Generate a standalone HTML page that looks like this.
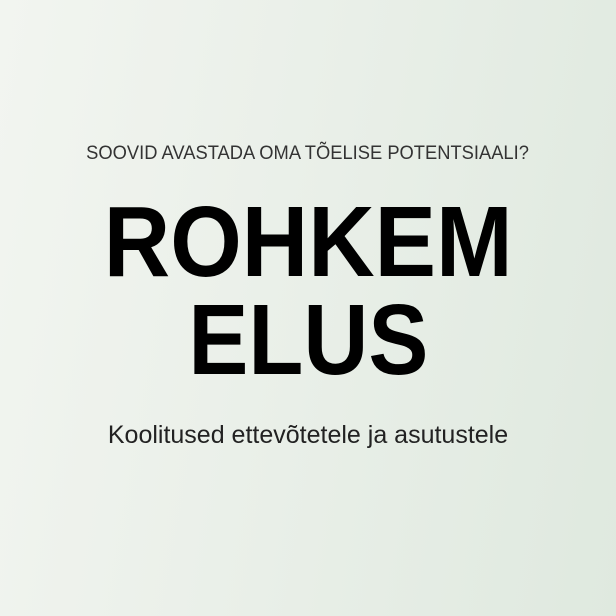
<!DOCTYPE html>
<html><head><meta charset="utf-8"><style>
html,body{margin:0;padding:0}
body{width:616px;height:616px;overflow:hidden;position:relative;background:linear-gradient(100deg,#f2f5f0 0%,#e9efe8 50%,#dfe9df 100%);font-family:"Liberation Sans",sans-serif;color:#000}
.l{position:absolute;left:0;width:616px;text-align:center;white-space:nowrap}
.l span{display:inline-block}
</style></head><body>
<div class="l" style="top:143.5px;font-size:19.5px;line-height:19.5px;color:#333"><span style="transform:scaleX(0.94)">SOOVID AVASTADA OMA TÕELISE POTENTSIAALI?</span></div>
<div class="l" style="top:192px;font-size:100px;line-height:100px;font-weight:bold"><span style="transform:scaleX(0.92)">ROHKEM</span></div>
<div class="l" style="top:290px;font-size:100px;line-height:100px;font-weight:bold"><span style="transform:scaleX(0.9)">ELUS</span></div>
<div class="l" style="top:423px;font-size:25px;line-height:25px;color:#222"><span>Koolitused ettevõtetele ja asutustele</span></div>
</body></html>
